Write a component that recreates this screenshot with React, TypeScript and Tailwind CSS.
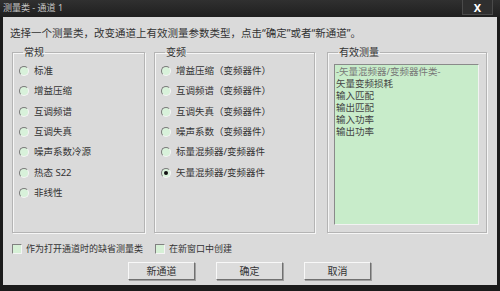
import React from 'react';

const font = { fontFamily: '"Noto Sans", "Noto Sans CJK SC", sans-serif' };

// 常规 / 变频 items
const normalItems = ['标准', '增益压缩', '互调频谱', '互调失真', '噪声系数冷源', '热态 S22', '非线性'];
const mixerItems = [
  '增益压缩（变频器件）',
  '互调频谱（变频器件）',
  '互调失真（变频器件）',
  '噪声系数（变频器件）',
  '标量混频器/变频器件',
  '矢量混频器/变频器件',
];
const validItems = ['矢量变频损耗', '输入匹配', '输出匹配', '输入功率', '输出功率'];

function Radio({ label, checked }: { label: string; checked?: boolean }) {
  return (
    <div className="flex items-center h-[20.3px]">
      <span className="w-[10px] h-[10px] rounded-full border border-t-[#7a7a7a] border-l-[#7a7a7a] border-b-[#f4f4f4] border-r-[#f4f4f4] bg-[#d8f1da] flex items-center justify-center">
        {checked && <span className="w-[4px] h-[4px] rounded-full bg-[#111]" />}
      </span>
      <span className="ml-[5px] text-[9.5px] leading-[12px] text-[#333]">{label}</span>
    </div>
  );
}

function GroupBox({ title, className, children }: { title: string; className: string; children: React.ReactNode }) {
  return (
    <fieldset className={`border border-[#b4b4b4] shadow-[inset_1px_1px_0_#f6f6f6,1px_1px_0_#f6f6f6] ${className}`}>
      <legend className="ml-[4px] px-[1px] text-[10px] leading-[12px] text-[#333]">{title}</legend>
      {children}
    </fieldset>
  );
}

function Btn({ label }: { label: string }) {
  return (
    <button className="w-[67px] h-[18px] bg-[#dcdcdc] border border-t-[#f8f8f8] border-l-[#f8f8f8] border-b-[#707070] border-r-[#707070] shadow-[1px_1px_0_#a0a0a0] text-[10px] leading-none text-[#333]">
      {label}
    </button>
  );
}

function Check({ label, className }: { label: string; className?: string }) {
  return (
    <div className={`flex items-center ${className ?? ''}`}>
      <span className="w-[10px] h-[10px] bg-[#d6f0d6] border border-t-[#808080] border-l-[#808080] border-b-[#f4f4f4] border-r-[#f4f4f4]" />
      <span className="ml-[4px] text-[9px] leading-[12px] text-[#333]">{label}</span>
    </div>
  );
}

export default function App() {
  return (
    <div className="w-[500px] h-[291px] bg-[#1b1b1b] flex flex-col overflow-hidden" style={font}>
      {/* title bar */}
      <div className="h-[17px] flex items-start bg-gradient-to-b from-[#303030] to-[#1f1f1f]">
        <span className="pl-[3px] pt-[2px] text-[9px] leading-[12px] text-[#c4c4c4]">测量类 - 通道 1</span>
        <div className="ml-auto mr-[7px] w-[31px] h-[15px] bg-[#2f2f2f] border border-[#4a4a4a] border-t-0 flex items-center justify-center text-white text-[11px] font-bold leading-none">
          X
        </div>
      </div>

      {/* body */}
      <div className="mx-[3px] h-[268px] bg-[#dadada] flex flex-col">
        <div className="pl-[7px] pt-[10px] text-[10.5px] leading-[12px] text-[#333]">
          选择一个测量类，改变通道上有效测量参数类型，点击“确定”或者“新通道”。
        </div>

        <div className="flex mt-[7px] ml-[9px] h-[187px]">
          <GroupBox title="常规" className="w-[133px] pl-[6px] pt-[3px]">
            {normalItems.map((t) => (
              <Radio key={t} label={t} />
            ))}
          </GroupBox>
          <GroupBox title="变频" className="w-[161px] ml-[9px] pl-[6px] pt-[3px]">
            {mixerItems.map((t, i) => (
              <Radio key={t} label={t} checked={i === 5} />
            ))}
          </GroupBox>
          <GroupBox title="有效测量" className="w-[160px] ml-[12px] pl-[6px] pr-[7px] pt-[6px] pb-[7px]">
            <div className="h-full bg-[#c8ecca] border border-t-[#8a8a8a] border-l-[#8a8a8a] border-b-[#f2f2f2] border-r-[#f2f2f2] pl-[1px] pt-[1px] text-[9.5px] leading-[12px] text-[#444]">
              <div className="text-[#777]">-矢量混频器/变频器件类-</div>
              {validItems.map((t) => (
                <div key={t}>{t}</div>
              ))}
            </div>
          </GroupBox>
        </div>

        {/* checkboxes */}
        <div className="flex items-center mt-[10px] ml-[9px] h-[12px]">
          <Check label="作为打开通道时的缺省测量类" className="w-[143px]" />
          <Check label="在新窗口中创建" />
        </div>

        {/* buttons */}
        <div className="flex mt-[7px] ml-[125px] gap-[21px]">
          <Btn label="新通道" />
          <Btn label="确定" />
          <Btn label="取消" />
        </div>
      </div>
    </div>
  );
}
